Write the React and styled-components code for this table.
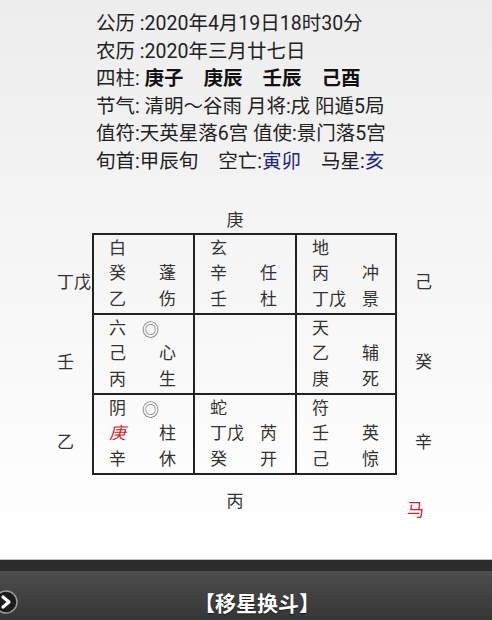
import styled, { createGlobalStyle } from "styled-components";

const GlobalStyle = createGlobalStyle`
  * { box-sizing: border-box; }
  html, body { margin: 0; padding: 0; }
  body {
    background: linear-gradient(#ededed 0px, #ffffff 540px, #ffffff 100%);
    font-family: Roboto, "Noto Sans CJK SC", sans-serif;
    color: #222;
  }
`;

const Page = styled.div`
  height: 620px;
  display: flex;
  flex-direction: column;
  overflow: hidden;
`;

const Info = styled.div`
  padding: 10px 0 0 96px;
  font-size: 19.5px;
  line-height: 27.6px;
  color: #222;
`;

const Line = styled.div`
  white-space: nowrap;
`;

const Strong = styled.b`
  font-weight: 700;
  color: #111;
  margin-right: ${(p) => p.$gap || 0}px;
`;

const Blue = styled.span`
  color: #1f2680;
`;

const Gap = styled.span`
  display: inline-block;
  width: ${(p) => p.$w}px;
`;

const Chart = styled.div`
  display: grid;
  grid-template-columns: 35px auto 1fr;
  grid-template-rows: 26px auto auto;
  margin: 31px 0 0 57px;
  font-size: 17px;
  color: #333;
`;

const TopLabel = styled.div`
  grid-row: 1;
  grid-column: 2;
  line-height: 26px;
  text-align: center;
  padding-right: 19px;
`;

const SideLabels = styled.div`
  grid-row: 2;
  grid-column: ${(p) => p.$col};
  display: flex;
  flex-direction: column;
  padding-left: ${(p) => p.$pad || 0}px;
`;

const Side = styled.div`
  height: 80px;
  padding-top: 39px;
  line-height: 20px;
  white-space: nowrap;
`;

const Board = styled.div`
  grid-row: 2;
  grid-column: 2;
  display: grid;
  grid-template-columns: 101px 102px 100px;
  grid-auto-rows: 80px;
  border-top: 2px solid #222;
  border-left: 2px solid #222;
`;

const Cell = styled.div`
  border-right: 2px solid #222;
  border-bottom: 2px solid #222;
  padding: 1px 0 0 15px;
  display: grid;
  grid-template-columns: 33px 17px auto;
  grid-auto-rows: 25.5px;
  line-height: 25.5px;
  align-content: start;
`;

const Stem = styled.span`
  grid-column: 1 / span 2;
  white-space: nowrap;
  color: ${(p) => (p.$red ? "#d3222c" : "inherit")};
  font-style: ${(p) => (p.$red ? "italic" : "normal")};
`;

const Mark = styled.span`
  font-family: "Noto Sans CJK SC", sans-serif;
  color: #555;
`;

const BottomLabel = styled.div`
  grid-row: 3;
  grid-column: 2;
  margin-top: 16px;
  line-height: 20px;
  text-align: center;
  padding-right: 19px;
`;

const Horse = styled.div`
  grid-row: 3;
  grid-column: 3;
  margin-top: 25px;
  padding-left: 10px;
  line-height: 20px;
  color: #d3222c;
`;

const Spacer = styled.div`
  flex: 1;
`;

const Bar = styled.div`
  height: 61px;
  flex-shrink: 0;
  border-top: 1px solid #c4c4c4;
  display: flex;
  flex-direction: column;
`;

const Band = styled.div`
  height: 11px;
  background: #2c2c2c;
`;

const BarMain = styled.div`
  flex: 1;
  display: flex;
  align-items: center;
  padding-top: 12px;
  background: linear-gradient(#4d4d4d, #363636);
`;

const Title = styled.div`
  flex: 1;
  text-align: center;
  color: #fff;
  font-size: 21px;
  font-weight: 700;
  padding-left: 2px;
  text-shadow: 0 1px 1px rgba(0, 0, 0, 0.6);
`;

const ArrowIcon = () => (
  <svg width="20" height="28" viewBox="0 0 20 28">
    <circle cx="6" cy="14" r="11" fill="#1c1c1c" stroke="#9a9a9a" strokeWidth="1.5" />
    <path d="M3 9 L9 14 L3 19" fill="none" stroke="#fff" strokeWidth="3.2" strokeLinecap="round" strokeLinejoin="round" />
  </svg>
);

const cells = [
  { god: "白", rows: [["癸", "蓬"], ["乙", "伤"]] },
  { god: "玄", rows: [["辛", "任"], ["壬", "杜"]] },
  { god: "地", rows: [["丙", "冲"], ["丁戊", "景"]] },
  { god: "六", mark: true, rows: [["己", "心"], ["丙", "生"]] },
  null,
  { god: "天", rows: [["乙", "辅"], ["庚", "死"]] },
  { god: "阴", mark: true, rows: [["庚", "柱", true], ["辛", "休"]] },
  { god: "蛇", rows: [["丁戊", "芮"], ["癸", "开"]] },
  { god: "符", rows: [["壬", "英"], ["己", "惊"]] },
];

export default function App() {
  return (
    <Page>
      <GlobalStyle />
      <Info>
        <Line>公历 :2020年4月19日18时30分</Line>
        <Line>农历 :2020年三月廿七日</Line>
        <Line>
          四柱: <Strong $gap={20}>庚子</Strong>
          <Strong $gap={20}>庚辰</Strong>
          <Strong $gap={20}>壬辰</Strong>
          <Strong>己酉</Strong>
        </Line>
        <Line>节气: 清明～谷雨 月将:戌 阳遁5局</Line>
        <Line>值符:天英星落6宫 值使:景门落5宫</Line>
        <Line>
          旬首:甲辰旬<Gap $w={20} />空亡:<Blue>寅卯</Blue>
          <Gap $w={20} />马星:<Blue>亥</Blue>
        </Line>
      </Info>

      <Chart>
        <TopLabel>庚</TopLabel>
        <SideLabels $col={1}>
          <Side>丁戊</Side>
          <Side>壬</Side>
          <Side>乙</Side>
        </SideLabels>
        <Board>
          {cells.map((c, i) =>
            c ? (
              <Cell key={i}>
                <span>{c.god}</span>
                <Mark>{c.mark ? "◎" : ""}</Mark>
                <span />
                {c.rows.map(([stem, star, red], j) => [
                  <Stem key={"s" + j} $red={red}>{stem}</Stem>,
                  <span key={"t" + j}>{star}</span>,
                ])}
              </Cell>
            ) : (
              <Cell key={i} />
            )
          )}
        </Board>
        <SideLabels $col={3} $pad={18}>
          <Side>己</Side>
          <Side>癸</Side>
          <Side>辛</Side>
        </SideLabels>
        <BottomLabel>丙</BottomLabel>
        <Horse>马</Horse>
      </Chart>

      <Spacer />

      <Bar>
        <Band />
        <BarMain>
          <ArrowIcon />
          <Title>【移星换斗】</Title>
        </BarMain>
      </Bar>
    </Page>
  );
}
